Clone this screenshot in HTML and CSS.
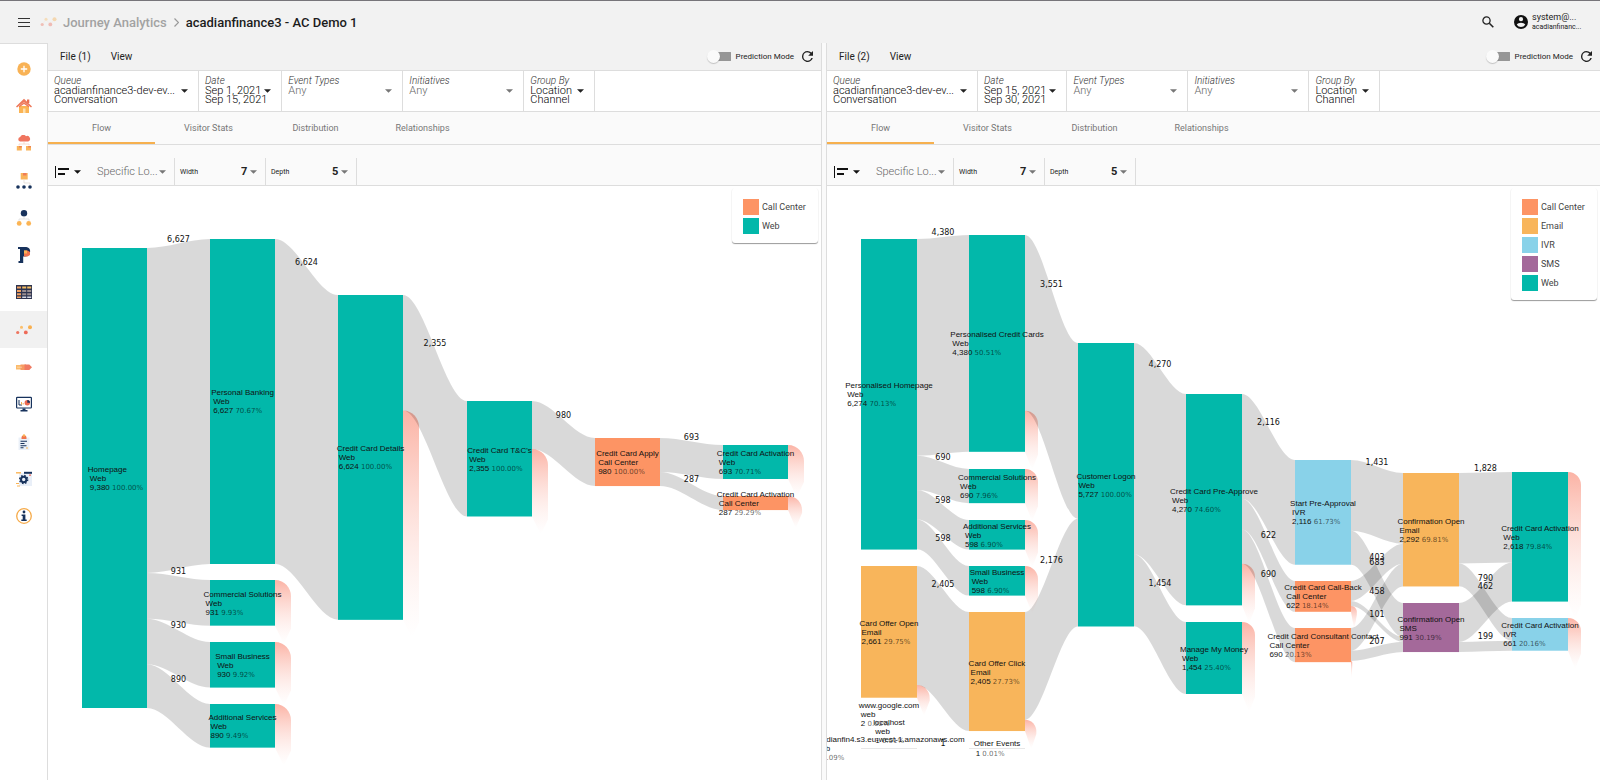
FILE: index.html
```html
<!DOCTYPE html>
<html lang="en">
<head>
<meta charset="utf-8">
<title>Journey Analytics</title>
<link rel="stylesheet" href="styles.css">
</head>
<body>
<svg class="sprite" aria-hidden="true">
  <symbol id="caret" viewBox="0 0 8 4"><path d="M0 0h8L4 4z" fill="currentColor"/></symbol>
  <symbol id="refresh" viewBox="4 4 16 16"><path fill="currentColor" d="M17.65 6.35A7.96 7.96 0 0 0 12 4a8 8 0 1 0 7.73 10h-2.08A6 6 0 1 1 12 6c1.66 0 3.14.69 4.22 1.78L13 11h7V4z"/></symbol>
  <symbol id="align" viewBox="0 0 14 14"><path fill="currentColor" d="M0 1h1v12H0zM3 3h11v2H3zM3 8h7v2H3z"/></symbol>
  <symbol id="journey" viewBox="0 0 16 16">
    <path d="M1.600 10.500L5.500 5.500L9.700 10.500L14.200 5" fill="none" stroke="#fbe3d0" stroke-width=".7"/>
    <circle cx="1.700" cy="10.500" r="1.600" fill="#ee7560"/><circle cx="5.500" cy="5.200" r="1.500" fill="#fbbf6a"/><circle cx="9.800" cy="10.400" r="1.900" fill="#ee6a58"/><circle cx="14" cy="5.200" r="2" fill="#f9b04f"/>
  </symbol>
</svg>

<header class="topbar">
  <button class="icon-btn menu-btn" aria-label="Menu"><svg width="12" height="9" viewBox="0 0 12 9"><path d="M0 .5h12M0 4.500h12M0 8.500h12" stroke="#333" stroke-width="1.200"/></svg></button>
  <svg class="brand" width="17" height="16"><use href="#journey"/></svg>
  <nav class="crumbs" aria-label="Breadcrumb">
    <a href="#" class="crumb-root">Journey Analytics</a>
    <svg width="5" height="9" viewBox="0 0 5 9"><path d="M.5.5l4 4-4 4" fill="none" stroke="#999" stroke-width="1.200"/></svg>
    <h1 class="crumb-current">acadianfinance3 - AC Demo 1</h1>
  </nav>
  <button class="icon-btn search-btn" aria-label="Search"><svg width="12" height="12" viewBox="0 0 12 12"><circle cx="4.500" cy="4.500" r="3.600" fill="none" stroke="#222" stroke-width="1.300"/><path d="M7.300 7.300l4 4" stroke="#222" stroke-width="1.600"/></svg></button>
  <button class="account">
    <svg width="14" height="14" viewBox="2 2 20 20"><path fill="#111" d="M12 2a10 10 0 1 0 0 20 10 10 0 0 0 0-20zm0 3a3 3 0 1 1 0 6 3 3 0 0 1 0-6zm0 14.200a7.200 7.200 0 0 1-6-3.220c.03-1.990 4-3.080 6-3.080s5.970 1.090 6 3.080a7.200 7.200 0 0 1-6 3.220z"/></svg>
    <span class="account-text"><span class="account-user">system@...</span><span class="account-org">acadianfinanc...</span></span>
  </button>
</header>

<div class="body">
  <nav class="sidebar" aria-label="Main">
    <a href="#" aria-label="Add"><svg viewBox="0 0 16 16"><circle cx="8" cy="8" r="6.700" fill="#f8b255"/><path d="M8 4.800v6.400M4.800 8h6.400" stroke="#fff" stroke-width="1.300"/></svg></a>
    <a href="#" aria-label="Home"><svg viewBox="0 0 16 16"><path d="M3 8h10v7H3z" fill="#fbb454"/><path d="M11 1.500h2.300V5H11z" fill="#e96f52"/><path d="M8 .8L16 8.500l-1 1L8 4 1 9.500l-1-1z" fill="#ee7a5c"/><path d="M8 4l5 4v1.500L8 6 3 9.500V8z" fill="#ee7a5c"/><path d="M7 10.500h2.500V15H7z" fill="#fde0b0"/></svg></a>
    <a href="#" aria-label="Sources"><svg viewBox="0 0 16 16"><path d="M4 6.500a2.300 2.300 0 0 1 .2-4.500A3.300 3.300 0 0 1 10 1.200a2.600 2.600 0 0 1 2.300 5.300z" fill="#f0755f"/><path d="M8 7v2M3 10.500V9h10v1.500" stroke="#f6d5c4" stroke-width=".8" fill="none"/><path d="M.8 11h5v4.500h-5zM10 11h5v4.500h-5z" fill="#f9b45b"/><path d="M3 11h2.800v1.600H3zM12.200 11H15v1.600h-2.800z" fill="#ef8450"/></svg></a>
    <a href="#" aria-label="Hierarchy"><svg viewBox="0 0 16 16"><path d="M4.700 0h7v6.500h-7z" fill="#f9b45b"/><path d="M7 0h3.500v2.500H7z" fill="#ef7d58"/><path d="M8 7v3h6v2" stroke="#e0d8d0" stroke-width=".7" fill="none"/><circle cx="2" cy="14" r="1.800" fill="#17325c"/><circle cx="8" cy="14" r="1.800" fill="#17325c"/><circle cx="14" cy="14" r="1.800" fill="#17325c"/></svg></a>
    <a href="#" aria-label="Segments"><svg viewBox="0 0 16 16"><circle cx="8" cy="3.200" r="3.200" fill="#17325c"/><path d="M8 6.500V9M3 11V9h10v2" stroke="#ddd" stroke-width=".8" fill="none"/><circle cx="3.200" cy="13.400" r="2.400" fill="#fbb454"/><circle cx="12.700" cy="13.400" r="2.400" fill="#fbb454"/></svg></a>
    <a href="#" aria-label="Profiles"><svg viewBox="0 0 16 16"><path d="M2 0h8a4 4 0 0 1 4 5c-.5 3-2 4.500-5 4.500H7.200V16H2.500v-2H4V2H2z" fill="#17325c"/><path d="M8 3.500h3.500L14 5v3l-2.500 1.500H8z" fill="#f2744f"/><path d="M8 3.500h3v3H8z" fill="#fbb454"/></svg></a>
    <a href="#" aria-label="Tables"><svg viewBox="0 0 16 16"><path d="M0 1h16v14H0z" fill="#2d3450"/><path d="M1 2.500h4v2H1zM1 6h4v2H1zM1 9.300h4v2H1zM1 12.500h4v1.500H1z" fill="#f2a160"/><path d="M6.200 2.500h4v2h-4zM11.200 2.500h4v2h-4z" fill="#f4bd62"/><path d="M6.200 6h4v2h-4zM11.200 6h4v2h-4zM6.200 9.300h4v2h-4zM11.200 9.300h4v2h-4z" fill="#9a8f91"/><path d="M6.200 12.500h4V14h-4zM11.200 12.500h4V14h-4z" fill="#d5d8e4"/></svg></a>
    <a href="#" aria-label="Journey Analytics" aria-current="page"><svg viewBox="0 0 16 16"><use href="#journey"/></svg></a>
    <a href="#" aria-label="Attribution"><svg viewBox="0 0 16 16"><path d="M0 6h5.500v4.500H0z" fill="#fbbb6c"/><path d="M4.500 5.500H10v5.500H4.500z" fill="#f79b62"/><path d="M8.500 5.500h4.800L16 8.200 13.300 11H8.500z" fill="#f07a62"/><path d="M1 8.200h5" stroke="#fff" stroke-width=".8" opacity=".5"/></svg></a>
    <a href="#" aria-label="Dashboards"><svg viewBox="0 0 16 16"><rect x=".6" y="1.300" width="14.800" height="10.700" rx=".8" fill="#fff" stroke="#17325c" stroke-width="1.200"/><path d="M3 4v5h3" stroke="#17325c" fill="none"/><path d="M5.500 6v2.500M7.200 7v1.500" stroke="#f9b04f"/><circle cx="11.300" cy="6.800" r="2.700" fill="#ee6a50"/><path d="M11.300 6.800V4.100a2.700 2.700 0 0 1 2.700 2.700z" fill="#17325c"/><path d="M6.500 12.500h3V14h2v1.500h-7V14h2z" fill="#17325c"/></svg></a>
    <a href="#" aria-label="Reports"><svg viewBox="0 0 16 16"><path d="M2.500 3.500h11V16h-11z" fill="#eaf0f8"/><path d="M5.500 3.800a2.300 2.300 0 0 1 5 0V5h-5z" fill="#f0754f"/><circle cx="8" cy="1.500" r="1.200" fill="#fbb454"/><path d="M4.500 7.200h6.500M4.500 9.500h4M4.500 11.700h6M4.500 13.800h3" stroke="#17325c" stroke-width="1.100"/><path d="M10 14h2" stroke="#f9b04f"/></svg></a>
    <a href="#" aria-label="Settings"><svg viewBox="0 0 16 16"><path d="M3 2h13v13H3z" fill="#e9eff8"/><path d="M8 .8h8v2H8z" fill="#17325c"/><path d="M0 1.800h5" stroke="#fbb454" stroke-width="1.400"/><path d="M13 4.200h2" stroke="#ee6a58" stroke-width="1.200"/><circle cx="7.700" cy="8.500" r="2.700" fill="none" stroke="#17325c" stroke-width="2"/><circle cx="7.700" cy="8.500" r="4" fill="none" stroke="#17325c" stroke-width="1.400" stroke-dasharray="1.570 1.570"/><path d="M0 12.500h3M1 15h3" stroke="#fbb454"/></svg></a>
    <a href="#" aria-label="Information"><svg viewBox="0 0 16 16"><circle cx="8" cy="8" r="7.300" fill="#fff" stroke="#f6ab4a" stroke-width="1.300"/><circle cx="8" cy="4" r="1.400" fill="#17325c"/><path d="M5.600 6.500h3.800v5h1.300V13H5.300v-1.500h1.400V8H5.600z" fill="#17325c"/></svg></a>
  </nav>

  <main class="panes">
    <section class="pane" aria-label="Journey 1">
      <div class="menubar">
        <button class="menu-item">File (1)</button>
        <button class="menu-item">View</button>
        <label class="switch"><input type="checkbox"><span>Prediction Mode</span></label>
        <button class="icon-btn" aria-label="Refresh"><svg width="11" height="11"><use href="#refresh"/></svg></button>
      </div>
      <div class="filters">
        <button class="filter f-queue"><span class="filter-label">Queue</span><span class="filter-value">acadianfinance3-dev-ev...</span><span class="filter-value wide">Conversation</span><svg class="caret"><use href="#caret"/></svg></button>
        <button class="filter f-date"><span class="filter-label">Date</span><span class="filter-value">Sep 1, 2021</span><span class="filter-value wide">Sep 15, 2021</span><svg class="caret"><use href="#caret"/></svg></button>
        <label class="filter f-any"><span class="filter-label">Event Types</span><select><option>Any</option></select><svg class="caret"><use href="#caret"/></svg></label>
        <label class="filter f-any"><span class="filter-label">Initiatives</span><select><option>Any</option></select><svg class="caret"><use href="#caret"/></svg></label>
        <button class="filter f-group"><span class="filter-label">Group By</span><span class="filter-value">Location</span><span class="filter-value wide">Channel</span><svg class="caret"><use href="#caret"/></svg></button>
      </div>
      <div class="tabs" role="tablist">
        <button class="tab" role="tab" aria-selected="true">Flow</button>
        <button class="tab" role="tab">Visitor Stats</button>
        <button class="tab" role="tab">Distribution</button>
        <button class="tab" role="tab">Relationships</button>
      </div>
      <div class="tools">
        <button class="icon-btn align-btn" aria-label="Alignment"><svg width="14" height="14"><use href="#align"/></svg><svg class="caret"><use href="#caret"/></svg></button>
        <label class="tool t-location"><select aria-label="Specific location"><option>Specific Lo...</option></select><svg class="caret"><use href="#caret"/></svg></label>
        <label class="tool t-number"><span>Width</span><select><option>7</option></select><svg class="caret"><use href="#caret"/></svg></label>
        <label class="tool t-number"><span>Depth</span><select><option>5</option></select><svg class="caret"><use href="#caret"/></svg></label>
      </div>
      <div class="chart">
        <svg id="flow-1" class="flow" viewBox="48 186 773 594" preserveAspectRatio="xMinYMin meet" role="img" aria-label="Flow, Sep 1 to Sep 15"></svg>
        <ul class="legend">
          <li><i class="swatch call"></i>Call Center</li>
          <li><i class="swatch web"></i>Web</li>
        </ul>
      </div>
    </section>

    <div class="splitter" role="separator"></div>

    <section class="pane" aria-label="Journey 2">
      <div class="menubar">
        <button class="menu-item">File (2)</button>
        <button class="menu-item">View</button>
        <label class="switch"><input type="checkbox"><span>Prediction Mode</span></label>
        <button class="icon-btn" aria-label="Refresh"><svg width="11" height="11"><use href="#refresh"/></svg></button>
      </div>
      <div class="filters">
        <button class="filter f-queue"><span class="filter-label">Queue</span><span class="filter-value">acadianfinance3-dev-ev...</span><span class="filter-value wide">Conversation</span><svg class="caret"><use href="#caret"/></svg></button>
        <button class="filter f-date"><span class="filter-label">Date</span><span class="filter-value">Sep 15, 2021</span><span class="filter-value wide">Sep 30, 2021</span><svg class="caret"><use href="#caret"/></svg></button>
        <label class="filter f-any"><span class="filter-label">Event Types</span><select><option>Any</option></select><svg class="caret"><use href="#caret"/></svg></label>
        <label class="filter f-any"><span class="filter-label">Initiatives</span><select><option>Any</option></select><svg class="caret"><use href="#caret"/></svg></label>
        <button class="filter f-group"><span class="filter-label">Group By</span><span class="filter-value">Location</span><span class="filter-value wide">Channel</span><svg class="caret"><use href="#caret"/></svg></button>
      </div>
      <div class="tabs" role="tablist">
        <button class="tab" role="tab" aria-selected="true">Flow</button>
        <button class="tab" role="tab">Visitor Stats</button>
        <button class="tab" role="tab">Distribution</button>
        <button class="tab" role="tab">Relationships</button>
      </div>
      <div class="tools">
        <button class="icon-btn align-btn" aria-label="Alignment"><svg width="14" height="14"><use href="#align"/></svg><svg class="caret"><use href="#caret"/></svg></button>
        <label class="tool t-location"><select aria-label="Specific location"><option>Specific Lo...</option></select><svg class="caret"><use href="#caret"/></svg></label>
        <label class="tool t-number"><span>Width</span><select><option>7</option></select><svg class="caret"><use href="#caret"/></svg></label>
        <label class="tool t-number"><span>Depth</span><select><option>5</option></select><svg class="caret"><use href="#caret"/></svg></label>
      </div>
      <div class="chart">
        <svg id="flow-2" class="flow" viewBox="827 186 773 594" preserveAspectRatio="xMinYMin meet" role="img" aria-label="Flow, Sep 15 to Sep 30"></svg>
        <ul class="legend">
          <li><i class="swatch call"></i>Call Center</li>
          <li><i class="swatch email"></i>Email</li>
          <li><i class="swatch ivr"></i>IVR</li>
          <li><i class="swatch sms"></i>SMS</li>
          <li><i class="swatch web"></i>Web</li>
        </ul>
      </div>
    </section>
  </main>
</div>
<script src="charts.js"></script>
</body>
</html>
```

FILE: styles.css
```css
* { box-sizing: border-box; }
body {
  margin: 0;
  min-height: 100vh;
  display: flex;
  flex-direction: column;
  font-family: Roboto, "Liberation Sans", sans-serif;
  font-size: 10px;
  color: #222;
  background: #fff;
}
button, select, input { font: inherit; color: inherit; }
button { border: 0; background: none; padding: 0; margin: 0; text-align: left; }
select { appearance: none; border: 0; background: none; padding: 0; margin: 0; min-width: 0; outline: 0; }
a { color: inherit; text-decoration: none; }
.sprite { display: none; }
.icon-btn { display: flex; align-items: center; }
.caret { width: 7px; height: 4px; flex: none; color: #777; }

.topbar {
  height: 43px;
  flex: none;
  display: flex;
  align-items: center;
  padding: 0 16px 0 18px;
  background: #f2f2f2;
  border-top: 1px solid #77757a;
}
.menu-btn { margin-right: 10px; }
.brand { margin-right: 6px; opacity: .4; }
.crumbs { display: flex; align-items: center; gap: 7px; font-size: 13px; font-weight: 500; flex: 1; }
.crumb-root { color: #a2a2a2; }
.crumb-current { margin: 0; font-size: 13px; font-weight: 500; color: #1c1c1c; }
.search-btn { margin-right: 20px; }
.account { display: flex; align-items: center; gap: 4px; }
.account-text { width: 52px; }
.account-text span { display: block; white-space: nowrap; }
.account-user { font-size: 9px; line-height: 11px; }
.account-org { font-size: 7px; line-height: 9px; }

.body { flex: 1; display: flex; }
.sidebar {
  width: 47px;
  height: 492px;
  flex: none;
  padding-top: 6px;
  border-top: 1px solid #ddd;
  display: grid;
  grid-template-rows: repeat(13, minmax(0, 1fr));
}
.sidebar a { display: flex; align-items: center; justify-content: center; }
.sidebar a[aria-current] { background: #f1f1f1; }
.sidebar svg { width: 16px; height: 16px; }

.panes { flex: 1; min-width: 0; display: flex; border-left: 1px solid #ddd; }
.pane { flex: 1 1 0; min-width: 0; display: flex; flex-direction: column; }
.splitter { width: 6px; flex: none; background: #fafafa; border: solid #ddd; border-width: 0 1px; }

.menubar {
  height: 28px;
  display: flex;
  align-items: center;
  padding: 0 8px 0 12px;
  background: #f2f2f2;
  border-bottom: 1px solid #ddd;
}
.menu-item { margin-right: 20px; }
.switch { margin-left: auto; margin-right: 8px; display: flex; align-items: center; gap: 5px; font-size: 8px; }
.switch input {
  appearance: none;
  width: 24px;
  height: 13px;
  margin: 0;
  background: linear-gradient(#969696, #969696) right center / 18px 9px no-repeat;
  border-radius: 3px;
}
.switch input::before {
  content: "";
  display: block;
  width: 13px;
  height: 13px;
  border-radius: 50%;
  background: #fafafa;
  box-shadow: 0 1px 1px rgba(0, 0, 0, .2);
}

.filters { height: 41px; display: flex; background: #fff; border-bottom: 1px solid #ddd; }
.filter {
  display: grid;
  grid-template-columns: 1fr auto;
  grid-template-rows: 11px 9px 9px;
  align-items: center;
  padding: 4px 10px 0 6px;
  border-right: 1px solid #ddd;
  font-size: 11px;
  font-weight: 300;
  line-height: 9px;
  white-space: nowrap;
}
.filter-label { grid-area: 1 / 1 / 2 / 3; font-size: 10px; font-style: italic; color: #333; }
.filter-value { grid-area: 2 / 1; color: #000; }
.filter-value.wide { grid-area: 3 / 1 / 4 / 3; }
.filter .caret { grid-area: 2 / 2; color: #222; }
.filter select { height: 11px; line-height: 11px; color: #666; grid-area: 2 / 1; }
.filter.f-any .caret { color: #777; }
.f-queue { width: 151px; }
.f-date { min-width: 83px; }
.f-date .caret { margin-left: 3px; }
.f-any { width: 121px; }
.f-group { width: 71px; }

.tabs { height: 33px; display: flex; background: #fafafa; border-bottom: 1px solid #ddd; }
.tab { width: 107px; text-align: center; font-size: 9px; color: #777; border: solid transparent; border-width: 2px 0; }
.tab[aria-selected="true"] { border-bottom-color: #f6b04e; }

.tools { height: 41px; display: flex; align-items: flex-end; background: #fafafa; border-bottom: 1px solid #ddd; }
.align-btn { width: 49px; height: 27px; padding-left: 7px; gap: 5px; color: #111; }
.align-btn .caret { color: #111; }
.tool { height: 27px; display: flex; align-items: center; border-right: 1px solid #ddd; }
.t-location { width: 78px; padding-right: 8px; font-size: 11px; font-weight: 300; }
.t-location select { flex: 1; color: #666; }
.t-number { width: 91px; padding: 0 8px 0 5px; font-size: 7px; }
.t-number select { margin-left: auto; margin-right: 2px; font-size: 11px; font-weight: 700; }

.chart { flex: 1; position: relative; background: #fff; }
.flow { display: block; width: 100%; height: auto; overflow: hidden; }
.legend {
  position: absolute;
  top: 2px;
  right: 3px;
  width: 86px;
  margin: 0;
  padding: 11px 11px 9px;
  list-style: none;
  display: grid;
  gap: 3px;
  background: #fff;
  border-radius: 3px;
  box-shadow: 0 1px 1px rgba(0, 0, 0, .4);
  font-size: 9px;
  color: #444;
}
.legend li { display: flex; align-items: center; gap: 3px; height: 16px; white-space: nowrap; }
.swatch { width: 16px; height: 16px; flex: none; }
.swatch.web { background: #02b8aa; }
.swatch.call { background: #fd9464; }
.swatch.email { background: #f8b55b; }
.swatch.ivr { background: #89d2e9; }
.swatch.sms { background: #a4699a; }

.node.web { fill: #02b8aa; }
.node.call { fill: #fd9464; }
.node.email { fill: #f8b55b; }
.node.ivr { fill: #89d2e9; }
.node.sms { fill: #a4699a; }
.node.other { fill: #ddd; }
.link { fill: #000; fill-opacity: .15; }
.count { font: 8px "DejaVu Sans", sans-serif; fill: #111; text-anchor: middle; }
.name { font: 8px "Liberation Sans", Arial, sans-serif; fill: #111; }
.percent { font: 7px "DejaVu Sans", sans-serif; fill: #000; fill-opacity: .6; }
```

FILE: charts.js
```js
const NS = "http://www.w3.org/2000/svg";
const CHANNELS = { web: "Web", call: "Call Center", email: "Email", ivr: "IVR", sms: "SMS" };
const CURVE = 0.33;

function add(parent, tag, attrs, text) {
  const el = document.createElementNS(NS, tag);
  for (const key in attrs) el.setAttribute(key, attrs[key]);
  if (text !== undefined) el.textContent = text;
  parent.appendChild(el);
  return el;
}

function drawFlow(id, chart) {
  const svg = document.getElementById(id);
  const defs = add(svg, "defs", {});
  const grad = add(defs, "linearGradient", { id: id + "-exit", x1: 0, y1: 0, x2: 0, y2: 1 });
  add(grad, "stop", { offset: 0, "stop-color": "#fbb3a5" });
  add(grad, "stop", { offset: 1, "stop-color": "#fff", "stop-opacity": 0.4 });

  const exits = add(svg, "g", {});
  const links = add(svg, "g", {});
  const nodes = add(svg, "g", {});
  const labels = add(svg, "g", {});
  const w = chart.nodeWidth;
  const byId = {};

  chart.nodes.forEach(([key, col, y, value, channel, name, percent, second]) => {
    byId[key] = { x: chart.columns[col], y, h: value * chart.scale, out: 0, in: 0, value, channel, name, percent, second };
  });

  chart.links.forEach(([from, to, value]) => {
    const a = byId[from], b = byId[to], t = value * chart.scale;
    const x0 = a.x + w, x1 = b.x, dx = (x1 - x0) * CURVE;
    const c0 = x0 + dx, c1 = x1 - dx;
    const y0 = a.y + a.out, y1 = b.y + b.in;
    a.out += t;
    b.in += t;
    add(links, "path", { class: "link", d: `M${x0} ${y0}C${c0} ${y0} ${c1} ${y1} ${x1} ${y1}V${y1 + t}C${c1} ${y1 + t} ${c0} ${y0 + t} ${x0} ${y0 + t}Z` });
    add(labels, "text", { class: "count", x: (x0 + x1) / 2, y: Math.round((y0 + y1) / 2 - 2) }, value.toLocaleString("en-US"));
  });

  Object.values(byId).forEach(n => {
    const rest = n.h - n.out, bottom = n.y + n.h;
    if (n.value > 100 && rest > 0.9) {
      const d = Math.min(chart.exitWidth, rest), x = n.x + w, y = n.y + n.out;
      add(exits, "path", { fill: `url(#${id}-exit)`, d: `M${x} ${y}C${x + d * 0.6} ${y} ${x + d} ${y + d * 0.5} ${x + d} ${y + d}V${Math.max(bottom + 3, y + d)}L${x + d * 0.55} ${bottom + 18}L${x} ${bottom}Z` });
    }
    if (n.channel) add(nodes, "rect", { class: "node " + n.channel, x: n.x, y: n.y, width: w, height: Math.max(n.h, 0.7) });

    const lines = n.second === null ? 1 : 2;
    const top = Math.round(n.y + n.h / 2 - (lines === 2 ? 6 : 2));
    const rows = [add(labels, "text", { class: "name", y: top }, n.name)];
    if (lines === 2) rows.push(add(labels, "text", { class: "name", y: top + 9 }, n.second || CHANNELS[n.channel]));
    const last = add(labels, "text", { class: "name", y: top + (lines === 2 ? 18 : 10) });
    add(last, "tspan", {}, n.value.toLocaleString("en-US") + " ");
    add(last, "tspan", { class: "percent" }, n.percent + "%");
    rows.push(last);

    const indent = 2;
    const widest = Math.max(...rows.map(row => row.getComputedTextLength()));
    const x = n.x + w / 2 - widest / 2;
    rows.forEach((row, i) => row.setAttribute("x", i ? x + indent : x));
  });
}

drawFlow("flow-1", {
  scale: 0.04904, nodeWidth: 65, exitWidth: 16,
  columns: [82, 210, 338, 467, 595, 723],
  nodes: [
    ["home", 0, 248, 9380, "web", "Homepage", "100.00"],
    ["bank", 1, 239, 6627, "web", "Personal Banking", "70.67"],
    ["comm", 1, 580, 931, "web", "Commercial Solutions", "9.93"],
    ["small", 1, 642, 930, "web", "Small Business", "9.92"],
    ["add", 1, 704, 890, "web", "Additional Services", "9.49"],
    ["details", 2, 295, 6624, "web", "Credit Card Details", "100.00"],
    ["terms", 3, 401, 2355, "web", "Credit Card T&C's", "100.00"],
    ["apply", 4, 438, 980, "call", "Credit Card Apply", "100.00"],
    ["actWeb", 5, 445, 693, "web", "Credit Card Activation", "70.71"],
    ["actCall", 5, 496, 287, "call", "Credit Card Activation", "29.29"]
  ],
  links: [
    ["home", "bank", 6627], ["home", "comm", 931], ["home", "small", 930], ["home", "add", 890],
    ["bank", "details", 6624], ["details", "terms", 2355], ["terms", "apply", 980],
    ["apply", "actWeb", 693], ["apply", "actCall", 287]
  ]
});

drawFlow("flow-2", {
  scale: 0.0495, nodeWidth: 56, exitWidth: 13,
  columns: [861, 969, 1078, 1186, 1295, 1403, 1512],
  nodes: [
    ["home", 0, 239, 6274, "web", "Personalised Homepage", "70.13"],
    ["open", 0, 566, 2661, "email", "Card Offer Open", "29.75"],
    ["google", 0, 714, 2, "", "www.google.com", "0.02", "web"],
    ["local", 0, 731, 1, "", "localhost", "0.01", "web"],
    ["aws", 0, 748, 8, "other", "acadianfin4.s3.eu-west-1.amazonaws.com", "0.09", "web"],
    ["cards", 1, 235, 4380, "web", "Personalised Credit Cards", "50.51"],
    ["comm", 1, 469, 690, "web", "Commercial Solutions", "7.96"],
    ["add", 1, 520, 598, "web", "Additional Services", "6.90"],
    ["small", 1, 566, 598, "web", "Small Business", "6.90"],
    ["click", 1, 612, 2405, "email", "Card Offer Click", "27.73"],
    ["other", 1, 748, 1, "other", "Other Events", "0.01", null],
    ["logon", 2, 343, 5727, "web", "Customer Logon", "100.00"],
    ["pre", 3, 394, 4270, "web", "Credit Card Pre-Approve", "74.60"],
    ["money", 3, 622, 1454, "web", "Manage My Money", "25.40"],
    ["start", 4, 460, 2116, "ivr", "Start Pre-Approval", "61.73"],
    ["back", 4, 581, 622, "call", "Credit Card Call-Back", "18.14"],
    ["consult", 4, 628, 690, "call", "Credit Card Consultant Contact", "20.13"],
    ["confEmail", 5, 473, 2292, "email", "Confirmation Open", "69.81"],
    ["confSms", 5, 603, 991, "sms", "Confirmation Open", "30.19"],
    ["actWeb", 6, 472, 2618, "web", "Credit Card Activation", "79.84"],
    ["actIvr", 6, 618, 661, "ivr", "Credit Card Activation", "20.16"]
  ],
  links: [
    ["home", "cards", 4380], ["home", "comm", 690], ["home", "add", 598], ["home", "small", 598],
    ["open", "click", 2405], ["aws", "other", 1],
    ["cards", "logon", 3551], ["click", "logon", 2176],
    ["logon", "pre", 4270], ["logon", "money", 1454],
    ["pre", "start", 2116], ["pre", "back", 622], ["pre", "consult", 690],
    ["start", "confEmail", 1431], ["start", "confSms", 683],
    ["back", "confEmail", 403], ["back", "confSms", 101],
    ["consult", "confEmail", 458], ["consult", "confSms", 207],
    ["confEmail", "actWeb", 1828], ["confEmail", "actIvr", 462],
    ["confSms", "actWeb", 790], ["confSms", "actIvr", 199]
  ]
});
```
